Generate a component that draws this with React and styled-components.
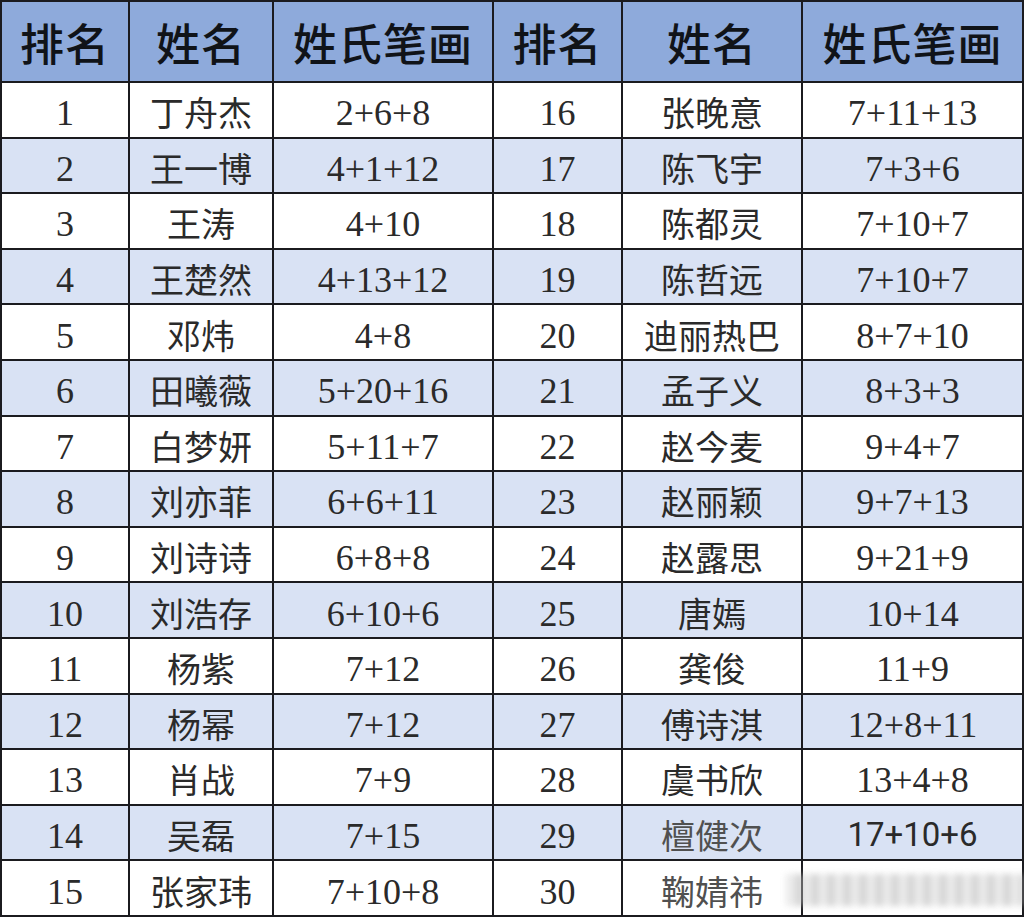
import React from "react"
import styled, { createGlobalStyle } from "styled-components"

const GlobalStyle = createGlobalStyle`
    html, body {
        margin: 0;
        padding: 0;
        background: #ffffff;
    }
`

const Page = styled.div`
    width: 1024px;
    height: 919px;
    position: relative;
    overflow: hidden;
    background: #ffffff;
`

const Grid = styled.div`
    display: grid;
    grid-template-columns: 126px 142px 218px 127px 178px 219px;
    grid-template-rows: 79px repeat(15, 53.6px);
    gap: 2px;
    padding: 2px;
    width: 1024px;
    box-sizing: border-box;
    background: #1b1b1f;
`

const HeadCell = styled.div`
    display: flex;
    align-items: center;
    justify-content: center;
    background: #8eaadb;
    color: #101318;
    font-family: "Noto Sans CJK SC", "Noto Sans", sans-serif;
    font-weight: 500;
    font-size: 44px;
    letter-spacing: 1px;
`

const Cell = styled.div`
    display: flex;
    align-items: center;
    justify-content: center;
    background: ${props => props.shaded ? '#d9e2f4' : '#ffffff'};
    color: ${props => props.faded ? '#505050' : '#2a2a2a'};
    font-family: ${props => props.sans
        ? '"Roboto", "Noto Sans", sans-serif'
        : props.num
            ? '"Liberation Serif", "DejaVu Serif", serif'
            : '"Noto Sans CJK SC", "Noto Sans", sans-serif'};
    font-size: ${props => props.sans ? '33px' : props.num ? '36px' : '34px'};
    padding-top: ${props => props.num ? '7px' : '4px'};
    white-space: nowrap;
`

const Watermark = styled.div`
    position: absolute;
    left: 786px;
    top: 874px;
    width: 238px;
    height: 32px;
    background: repeating-linear-gradient(90deg,
        rgba(200, 200, 200, 0.55) 0px,
        rgba(200, 200, 200, 0.55) 10px,
        rgba(170, 170, 170, 0.75) 10px,
        rgba(170, 170, 170, 0.75) 16px);
    filter: blur(3px);
    opacity: 0.7;
`

const left = [
    ["1", "丁舟杰", "2+6+8"],
    ["2", "王一博", "4+1+12"],
    ["3", "王涛", "4+10"],
    ["4", "王楚然", "4+13+12"],
    ["5", "邓炜", "4+8"],
    ["6", "田曦薇", "5+20+16"],
    ["7", "白梦妍", "5+11+7"],
    ["8", "刘亦菲", "6+6+11"],
    ["9", "刘诗诗", "6+8+8"],
    ["10", "刘浩存", "6+10+6"],
    ["11", "杨紫", "7+12"],
    ["12", "杨幂", "7+12"],
    ["13", "肖战", "7+9"],
    ["14", "吴磊", "7+15"],
    ["15", "张家玮", "7+10+8"],
]

const right = [
    ["16", "张晚意", "7+11+13"],
    ["17", "陈飞宇", "7+3+6"],
    ["18", "陈都灵", "7+10+7"],
    ["19", "陈哲远", "7+10+7"],
    ["20", "迪丽热巴", "8+7+10"],
    ["21", "孟子义", "8+3+3"],
    ["22", "赵今麦", "9+4+7"],
    ["23", "赵丽颖", "9+7+13"],
    ["24", "赵露思", "9+21+9"],
    ["25", "唐嫣", "10+14"],
    ["26", "龚俊", "11+9"],
    ["27", "傅诗淇", "12+8+11"],
    ["28", "虞书欣", "13+4+8"],
    ["29", "檀健次", "17+10+6"],
    ["30", "鞠婧祎", ""],
]

const headers = ["排名", "姓名", "姓氏笔画", "排名", "姓名", "姓氏笔画"]

const App = () => {
    return (
        <Page>
            <GlobalStyle />
            <Grid>
                {headers.map((h, i) => <HeadCell key={'h' + i}>{h}</HeadCell>)}
                {left.map((row, i) => {
                    const shaded = i % 2 === 1
                    const r = right[i]
                    const late = i >= 13
                    return (
                        <React.Fragment key={row[0]}>
                            <Cell num shaded={shaded}>{row[0]}</Cell>
                            <Cell shaded={shaded}>{row[1]}</Cell>
                            <Cell num shaded={shaded}>{row[2]}</Cell>
                            <Cell num shaded={shaded}>{r[0]}</Cell>
                            <Cell shaded={shaded} faded={late}>{r[1]}</Cell>
                            <Cell num={!late} sans={late} shaded={shaded}>{r[2]}</Cell>
                        </React.Fragment>
                    )
                })}
            </Grid>
            <Watermark />
        </Page>
    )
}

export default App
